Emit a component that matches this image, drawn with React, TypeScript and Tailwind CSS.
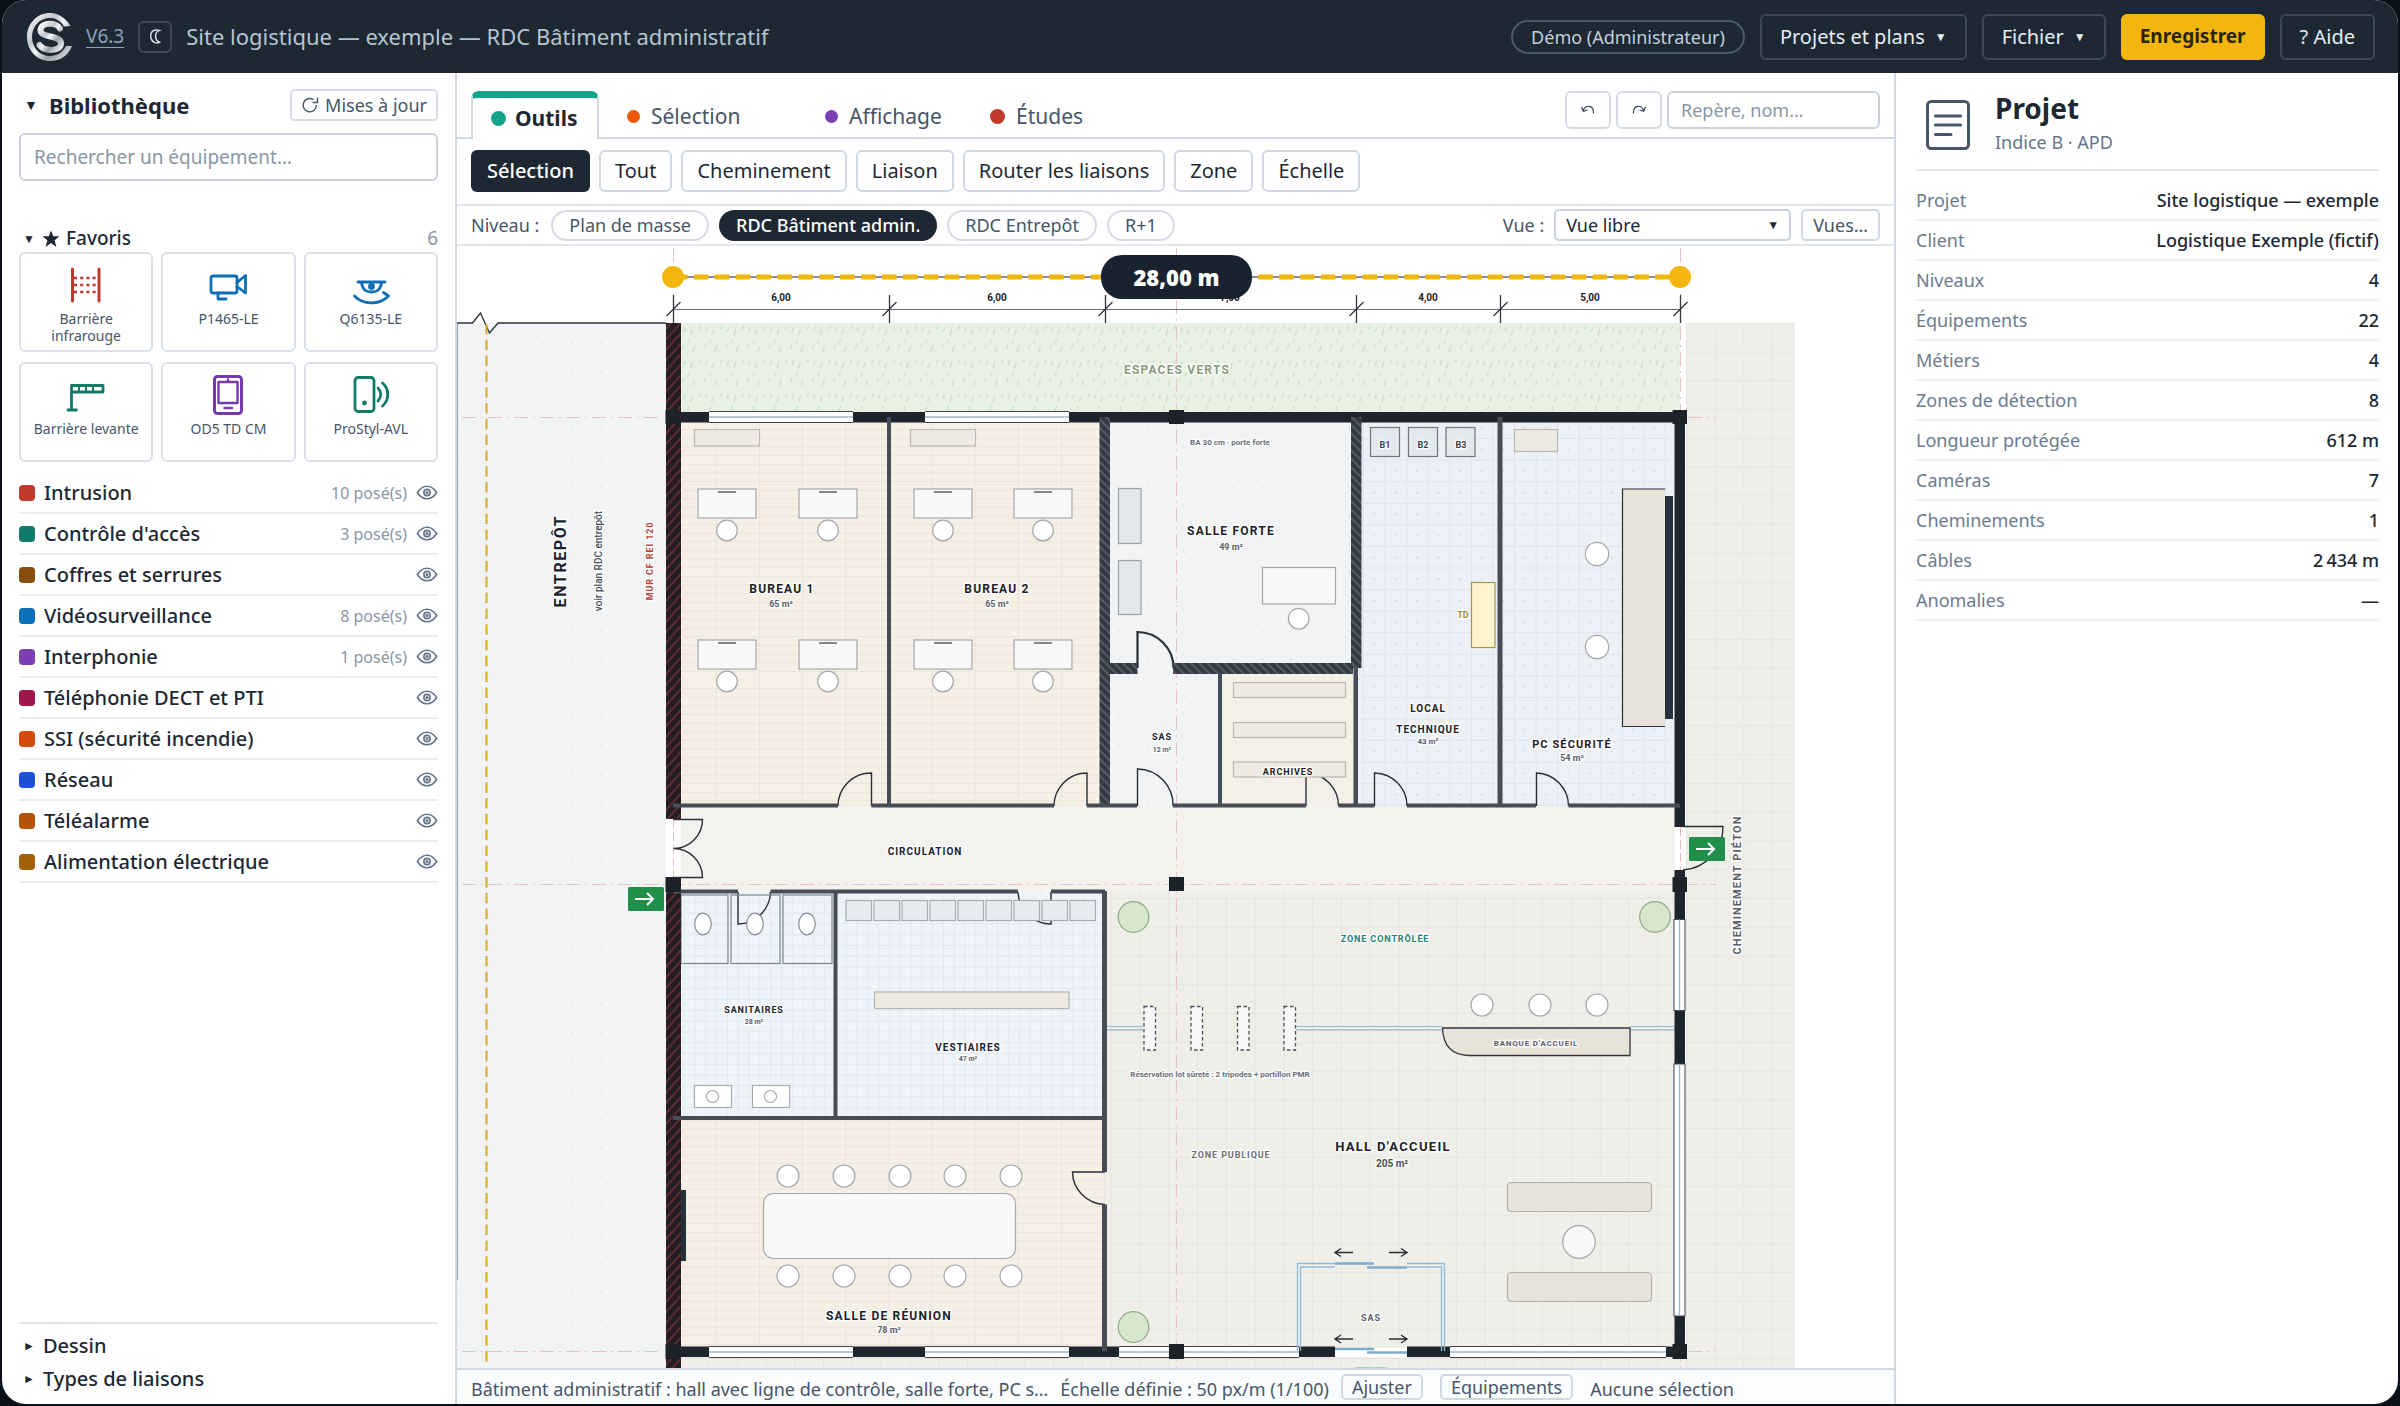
import React from "react";

const ui = "font-['Noto_Sans','Open_Sans',sans-serif]";

/* ---------- icons ---------- */

function Logo() {
  return (
    <svg viewBox="0 0 48 50" className="h-[50px] w-12" aria-hidden="true">
      <defs>
        <linearGradient id="chrome" x1="0" y1="0" x2="1" y2="1">
          <stop offset="0" stopColor="#ffffff" />
          <stop offset="0.35" stopColor="#c3c7cc" />
          <stop offset="0.5" stopColor="#f5f6f7" />
          <stop offset="0.7" stopColor="#9aa0a8" />
          <stop offset="1" stopColor="#f1f3f5" />
        </linearGradient>
      </defs>
      <path
        d="M46.500 14 C 41 5, 34 1, 26 1 C 13 1, 3 11.500, 3 25 C 3 38.500, 13 49, 26 49 C 36 49, 44 44, 48 34 L 42 34 C 38.500 40.500, 33 44, 26 44 C 16 44, 8 36, 8 25 C 8 14, 16 6, 26 6 C 32 6, 37 9, 40 14.500 Z"
        fill="url(#chrome)"
      />
      <path
        d="M36 16.500 C 33.500 10.500, 17 9.500, 16.500 18 C 16 26.500, 37.500 22.500, 37 31.500 C 36.500 40, 20 39.500, 15.500 33"
        fill="none"
        stroke="url(#chrome)"
        strokeWidth="6"
        strokeLinecap="round"
      />
    </svg>
  );
}

function Eye() {
  return (
    <svg viewBox="0 0 24 16" className="h-[15px] w-[22px]" fill="none" stroke="#64748b" strokeWidth="1.800" aria-hidden="true">
      <path d="M1.500 8 C 5 2.500, 9 1.200, 12 1.200 S 19 2.500, 22.500 8 C 19 13.500, 15 14.800, 12 14.800 S 5 13.500, 1.500 8 Z" />
      <circle cx="12" cy="8" r="3.400" />
      <circle cx="12" cy="8" r="0.800" fill="#64748b" />
    </svg>
  );
}

function IconBarrier() {
  return (
    <svg viewBox="0 0 40 40" className="size-10" fill="none" stroke="#c0392b" strokeWidth="3" strokeLinecap="round">
      <path d="M6.500 4 V36 M33 4 V36" />
      <path d="M8 13 H32 M8 20 H32 M8 27 H32" strokeDasharray="3 3.200" strokeLinecap="butt" strokeWidth="2.600" />
    </svg>
  );
}
function IconCamera() {
  return (
    <svg viewBox="0 0 40 40" className="size-10" fill="none" stroke="#0f6fb5" strokeWidth="2.800" strokeLinecap="round" strokeLinejoin="round">
      <rect x="3" y="11" width="26" height="17" rx="2" />
      <path d="M29 17.500 L37.500 10.500 V28 L29 21.500 M10 28 V34 H18" />
    </svg>
  );
}
function IconDome() {
  return (
    <svg viewBox="0 0 40 40" className="size-10" fill="none" stroke="#0f6fb5" strokeWidth="2.800" strokeLinecap="round" strokeLinejoin="round">
      <path d="M7 17 H34 M10.500 17 C 11 24, 15 27, 20.500 27 S 30 24, 30.500 17" />
      <circle cx="20.500" cy="21.500" r="2" fill="#0f6fb5" />
      <path d="M3.500 31 C 12 40, 28 40.500, 37.500 31 L32.500 27.500" />
    </svg>
  );
}
function IconGate() {
  return (
    <svg viewBox="0 0 40 40" className="size-10" fill="none" stroke="#127a68" strokeWidth="2.800" strokeLinecap="round" strokeLinejoin="round">
      <path d="M5.500 35 V10.500 H37 V17 H5.500 M2 35 H10.500" />
      <path d="M13 10.500 V17 M20 10.500 V17 M27 10.500 V17" strokeWidth="2" />
    </svg>
  );
}
function IconPhone() {
  return (
    <svg viewBox="0 0 40 40" className="size-10" fill="none" stroke="#743bb0" strokeWidth="3" strokeLinecap="round" strokeLinejoin="round">
      <rect x="6.500" y="1.500" width="27" height="37" rx="3" />
      <rect x="10.500" y="7" width="19" height="21" strokeWidth="2.400" />
      <path d="M16.500 33 H24 M20 4.500 V5" strokeWidth="2.400" />
    </svg>
  );
}
function IconReader() {
  return (
    <svg viewBox="0 0 40 40" className="size-10" fill="none" stroke="#127a68" strokeWidth="2.800" strokeLinecap="round" strokeLinejoin="round">
      <rect x="4" y="2.500" width="19" height="34" rx="3" />
      <path d="M27 13 C 30.500 17, 30.500 22, 27 26 M31.500 8 C 38.500 14, 38.500 25, 31.500 31" />
      <circle cx="13.500" cy="28" r="1" fill="#127a68" />
    </svg>
  );
}

/* ---------- floor plan ---------- */

type Box = [number, number, number, number];

const DARK = "#20242c";
const WALL = "#474d57";

function Rects({ items, fill, stroke, rx = 0 }: { items: Box[]; fill: string; stroke?: string; rx?: number }) {
  return (
    <>
      {items.map(([x, y, w, h], i) => (
        <rect key={i} x={x} y={y} width={w} height={h} rx={rx} fill={fill} stroke={stroke} />
      ))}
    </>
  );
}

function Label({
  x,
  y,
  size,
  children,
  color = "#1c222b",
  bold = true,
  spread = true,
  vertical = false,
}: {
  x: number;
  y: number;
  size: number;
  children: string;
  color?: string;
  bold?: boolean;
  spread?: boolean;
  vertical?: boolean;
}) {
  return (
    <text
      x={x}
      y={y}
      fontSize={size}
      fontWeight={bold ? 700 : 500}
      fill={color}
      stroke="#ffffff"
      strokeWidth="3"
      strokeOpacity="0.850"
      strokeLinejoin="round"
      paintOrder="stroke"
      textAnchor="middle"
      dominantBaseline="central"
      className={spread ? "tracking-widest" : ""}
      transform={vertical ? `rotate(-90 ${x} ${y})` : undefined}
    >
      {children}
    </text>
  );
}

function WindowH({ x, y, w }: { x: number; y: number; w: number }) {
  return (
    <g>
      <rect x={x} y={y} width={w} height={11} fill="#fff" />
      <path d={`M${x} ${y}H${x + w}M${x} ${y + 11}H${x + w}`} stroke="#3f444b" />
      <path d={`M${x} ${y + 5.5}H${x + w}`} stroke="#9fb4cb" strokeWidth="1.400" />
    </g>
  );
}
function WindowV({ y, h }: { y: number; h: number }) {
  return (
    <g>
      <rect x={1674} y={y} width={11} height={h} fill="#fff" stroke="#3f444b" />
      <path d={`M1679.5 ${y}V${y + h}`} stroke="#9fb4cb" strokeWidth="1.400" />
    </g>
  );
}

function ExitSign({ x, y }: { x: number; y: number }) {
  return (
    <g>
      <rect x={x} y={y} width={36} height={24} rx="1.500" fill="#1f8f4a" />
      <path d={`M${x + 7} ${y + 12}h18M${x + 19} ${y + 6}l6 6l-6 6`} fill="none" stroke="#fff" strokeWidth="2" />
    </g>
  );
}

const desks = [698, 799, 914, 1014].flatMap((x) => [
  [x, 489],
  [x, 640],
]);

const chairs: [number, number, number][] = [
  ...desks.map(([x, y]) => [x + 29, y + 41.5, 10.300] as [number, number, number]),
  [1298.700, 618.700, 10.300],
  [1597, 554, 11.700],
  [1597, 647, 11.700],
  [1482, 1005, 11],
  [1540, 1005, 11],
  [1597, 1005, 11],
  ...[788, 844, 900, 955, 1011].flatMap(
    (x) =>
      [
        [x, 1176, 11],
        [x, 1276, 11],
      ] as [number, number, number][],
  ),
];

function FloorPlan() {
  return (
    <svg
      viewBox="457 246 1438 1122"
      preserveAspectRatio="xMinYMin slice"
      className="block h-full w-full font-['Roboto',sans-serif]"
      role="img"
      aria-label="Plan RDC Bâtiment administratif"
    >
      <defs>
        <pattern id="dots" width="28.760" height="28.760" patternUnits="userSpaceOnUse" x="471" y="323">
          <circle cx="0.800" cy="6" r="0.800" fill="#dadde3" />
          <circle cx="15" cy="20" r="0.800" fill="#dadde3" />
        </pattern>
        <pattern id="grass" width="21.600" height="33.400" patternUnits="userSpaceOnUse" x="681" y="323">
          <path
            d="M3 9l1.500-4.500M9.500 12l2-6M18 7l1.500-3.500M1.500 26l1.500-4.500M12 29l2-6M7 20l1.500-3.500"
            stroke="#c6d6bc"
            fill="none"
          />
        </pattern>
        <pattern id="parquet" width="43.150" height="8.630" patternUnits="userSpaceOnUse" x="672.600" y="412">
          <path d="M0 0.500H43.150M0.500 0V8.630" stroke="#ebe4d9" fill="none" />
        </pattern>
        <pattern id="paving" width="28.760" height="28.760" patternUnits="userSpaceOnUse" x="1139.500" y="898">
          <path d="M0 0.500H28.760M0.500 0V28.760" stroke="#e5e4df" fill="none" />
        </pattern>
        <pattern id="tech" width="21.570" height="21.570" patternUnits="userSpaceOnUse" x="1363" y="416.500">
          <path d="M0 0.500H21.570M0.500 0V21.570" stroke="#dfe3eb" fill="none" />
          <circle cx="11" cy="11.500" r="1" fill="#cdd3df" />
        </pattern>
        <pattern id="tiles" width="10.800" height="10.800" patternUnits="userSpaceOnUse" x="673" y="891">
          <path d="M0 0.500H10.800M0.500 0V10.800" stroke="#e1e9f1" fill="none" />
        </pattern>
        <pattern id="fire" width="7" height="7" patternUnits="userSpaceOnUse" patternTransform="rotate(42)">
          <rect width="7" height="7" fill="#241d22" />
          <path d="M1 0V7" stroke="#7c3438" strokeWidth="1.300" />
        </pattern>
        <pattern id="armored" width="6" height="6" patternUnits="userSpaceOnUse" patternTransform="rotate(-45)">
          <rect width="6" height="6" fill="#343a43" />
          <path d="M1 0V6" stroke="#737b87" />
        </pattern>
      </defs>

      {/* grounds */}
      <rect x="457" y="323" width="209" height="1045" fill="#f1f3f5" />
      <rect x="457" y="323" width="209" height="1045" fill="url(#dots)" />
      <rect x="681" y="323" width="999" height="89" fill="#e8f1e2" />
      <rect x="681" y="323" width="999" height="89" fill="url(#grass)" />
      <rect x="1686" y="323" width="109" height="1045" fill="#efeee9" />
      <rect x="1686" y="323" width="109" height="1045" fill="url(#paving)" />
      <rect x="681" y="1357" width="1010" height="11" fill="#efeee9" />
      <rect x="681" y="1357" width="1010" height="11" fill="url(#paving)" />

      {/* rooms */}
      <rect x="681" y="417" width="421" height="389" fill="#f6efe5" />
      <rect x="681" y="417" width="421" height="389" fill="url(#parquet)" />
      <rect x="1108" y="417" width="248" height="389" fill="#f1f3f5" />
      <rect x="1108" y="417" width="248" height="389" fill="url(#dots)" />
      <rect x="1220" y="674" width="136" height="132" fill="#f3f0ea" />
      <rect x="1356" y="417" width="319" height="389" fill="#edf1f7" />
      <rect x="1356" y="417" width="319" height="389" fill="url(#tech)" />
      <rect x="681" y="806" width="994" height="86" fill="#f3f2ee" />
      <rect x="681" y="892" width="424" height="226" fill="#eef4f9" />
      <rect x="681" y="892" width="424" height="226" fill="url(#tiles)" />
      <rect x="681" y="1118" width="424" height="230" fill="#f6efe5" />
      <rect x="681" y="1118" width="424" height="230" fill="url(#parquet)" />
      <rect x="1105" y="892" width="570" height="456" fill="#efeee9" />
      <rect x="1105" y="892" width="570" height="456" fill="url(#paving)" />

      {/* warehouse edge */}
      <path d="M457.500 323V1280" stroke="#94a3b8" />
      <path d="M457 323H472.500L480.500 313L489.500 333L498 323H666" fill="none" stroke="#2c3138" strokeWidth="1.300" />
      <path d="M486.500 324V1362" stroke="#dba91f" strokeWidth="2" strokeDasharray="10.500 5.300" />

      {/* door swings */}
      <g fill="none" stroke="#2a2e35" strokeWidth="1.400">
        <path d="M871.500 806V773A33 33 0 0 0 838 806" />
        <path d="M1087 806V773A33 33 0 0 0 1054 806" />
        <path d="M1137.500 806V769A36 36 0 0 1 1173 806" />
        <path d="M1306 806V773A33 33 0 0 1 1338.500 806" />
        <path d="M1374.500 806V773A33 33 0 0 1 1407 806" />
        <path d="M1536.500 806V773A33 33 0 0 1 1568.500 806" />
        <path d="M738 892V924A33 33 0 0 0 770.500 892" />
        <path d="M1051 892V924A33 33 0 0 1 1018 892" />
        <path d="M1105 1172H1072.500A33 33 0 0 0 1105 1204.500" />
        <path d="M1137.500 668V632A36 36 0 0 1 1173.500 668" strokeWidth="2.200" />
      </g>

      {/* furniture */}
      <g strokeWidth="1.200">
        <Rects items={[[694.5, 429.5, 65, 16.5], [910.5, 429.5, 65, 16.5]]} fill="#edeae4" stroke="#b9b7b2" />
        <Rects items={[[1514.5, 429.5, 43, 22]]} fill="#edeae4" stroke="#b9b7b2" />
        {desks.map(([x, y], i) => (
          <g key={i}>
            <rect x={x} y={y} width={58} height={29} fill="#f8f8f8" stroke="#a6a8ab" />
            <rect x={x + 20} y={y + 2} width={18} height={2} fill="#83868b" />
          </g>
        ))}
        <Rects items={[[1118.5, 488.5, 22.5, 55], [1118.5, 560.5, 22.5, 54]]} fill="#e4e7ec" stroke="#9da1a8" />
        <Rects items={[[1262.5, 567.5, 73, 36.5]]} fill="#f8f8f8" stroke="#a6a8ab" />
        <Rects items={[[1233.5, 682.5, 112, 15], [1233.5, 722.5, 112, 15], [1233.5, 762, 112, 15]]} fill="#edeae1" stroke="#b9b7b0" />
        <Rects items={[[1370.5, 427.5, 29, 29], [1408.5, 427.5, 29, 29], [1446, 427.5, 29, 29]]} fill="#e4e7eb" stroke="#70757d" />
        <Rects items={[[1471.5, 582.5, 23.5, 65]]} fill="#fff3cc" stroke="#a3945a" />
        <rect x="1622" y="489" width="43" height="237.500" fill="#e7e3d9" />
        <path d="M1665 489H1622.500V726.500H1665" fill="none" stroke="#2c3036" />
        <rect x="1665" y="496" width="8" height="223" fill="#26313d" />
        <Rects items={[[681, 895, 47, 68.5], [731, 895, 49, 68.5], [783, 895, 49, 68.5]]} fill="none" stroke="#7d858f" />
        {[703, 755, 807].map((x) => (
          <ellipse key={x} cx={x} cy={924} rx="8.300" ry="10.800" fill="#fff" stroke="#8d9198" />
        ))}
        {[694.5, 752.5].map((x) => (
          <g key={x}>
            <rect x={x} y={1085.5} width={37} height={22} fill="#fff" stroke="#a9acb0" />
            <circle cx={x + 18} cy={1096.5} r={6} fill="none" stroke="#a9acb0" />
          </g>
        ))}
        {[0, 1, 2, 3, 4, 5, 6, 7, 8].map((i) => (
          <rect key={i} x={846 + i * 28} y={900.5} width={25.5} height={20} fill="#e7ebf0" stroke="#a9acb2" />
        ))}
        <Rects items={[[874.5, 992, 194.5, 16.5]]} fill="#edeae1" stroke="#b4b2ad" />
        <rect x="681" y="1190" width="5" height="71" fill="#26313d" />
        <rect x="763.500" y="1193.500" width="252" height="65" rx="10" fill="#f8f8f8" stroke="#a6a8ab" />
        <Rects items={[[1507.5, 1182.5, 144, 29], [1507.5, 1272.5, 144, 29]]} fill="#e7e4d9" stroke="#b0afaa" rx={4} />
        <circle cx="1579" cy="1242" r="16.300" fill="#f8f8f8" stroke="#a6a8ab" />
        {chairs.map(([x, y, r], i) => (
          <circle key={i} cx={x} cy={y} r={r} fill="#fff" stroke="#a6a8ab" />
        ))}
        {[[1133.5, 917], [1655, 917], [1133.5, 1327]].map(([x, y], i) => (
          <circle key={i} cx={x} cy={y} r={15.300} fill="#d6e7cb" stroke="#8fab82" />
        ))}
      </g>

      {/* glazing */}
      <g stroke="#93bcd6" strokeWidth="1.200" fill="none">
        <path d="M1107 1026.500H1143M1107 1029.800H1143M1296 1026.500H1442M1296 1029.800H1442M1630 1026.500H1676M1630 1029.800H1676" />
      </g>
      <path d="M1442.500 1028H1630V1055.500H1469C1452 1055 1443 1046 1442.500 1028Z" fill="#e7e3d9" stroke="#33373d" strokeWidth="1.300" />
      {[1144, 1191, 1237.5, 1284].map((x) => (
        <rect key={x} x={x} y={1006.5} width={11.5} height={43.5} fill="#f8f8f8" stroke="#4c5057" strokeDasharray="3.500 2.500" strokeWidth="1.300" />
      ))}

      {/* structural axes */}
      <g stroke="#e6c4c1" strokeDasharray="14 5 2 5" fill="none">
        <path d="M462 417.500H660M1688 417.500H1716M462 884.500H1716M462 1351.500H660M1688 1351.500H1716" />
        <path d="M673.500 248V1368M1176.500 248V1368M1680.500 248V1368" />
      </g>

      {/* outer walls */}
      <Rects
        items={[
          [666, 412, 1008, 10.5],
          [1674.5, 412, 10.5, 415],
          [1674.5, 870, 10.5, 488],
          [666, 1346.5, 669, 10.5],
          [1407, 1346.5, 278, 10.5],
        ]}
        fill={DARK}
      />
      <rect x="666" y="323" width="15" height="496" fill="url(#fire)" />
      <rect x="666" y="877" width="15" height="491" fill="url(#fire)" />
      <rect x="666" y="819" width="8" height="58" fill="#fff" />
      <rect x="1675" y="827" width="10" height="43" fill="#fff" />
      <path d="M673.500 819V877M1680.500 827V870" stroke="#e9bdbb" strokeDasharray="9 4" />
      <WindowH x={709} y={411.5} w={144} />
      <WindowH x={925} y={411.5} w={144} />
      <WindowH x={709} y={1346.5} w={144} />
      <WindowH x={925} y={1346.5} w={144} />
      <WindowH x={1119} y={1346.5} w={180} />
      <WindowH x={1450} y={1346.5} w={216} />
      <WindowV y={919.5} h={91} />
      <WindowV y={1064} h={252} />

      {/* partitions */}
      <Rects
        items={[
          [673, 803.5, 165, 4],
          [871.5, 803.5, 182.5, 4],
          [1087, 803.5, 50, 4],
          [1173, 803.5, 133, 4],
          [1338.5, 803.5, 36, 4],
          [1407, 803.5, 129, 4],
          [1568.5, 803.5, 111.5, 4],
          [887, 417, 4, 388],
          [1218, 674, 4, 131],
          [1353.5, 668, 4.5, 138],
          [1497.5, 417, 5, 388],
          [673, 889.5, 65, 4],
          [770.5, 889.5, 247.5, 4],
          [1051, 889.5, 54, 4],
          [833.5, 891, 4, 227],
          [673, 1116, 430, 4],
          [1102, 891, 5, 281],
          [1102, 1204.5, 5, 147],
        ]}
        fill={WALL}
      />
      <Rects
        items={[
          [1099.5, 417, 10.5, 387],
          [1351, 417, 10.5, 251],
          [1110, 663, 27.5, 11],
          [1173, 663, 180, 11],
        ]}
        fill="url(#armored)"
      />

      {/* columns */}
      <Rects
        items={[
          [665.5, 410, 15, 14],
          [1169, 410, 15, 14],
          [1672.5, 410, 14.5, 14],
          [665.5, 877, 15, 15],
          [1169, 877, 15, 14],
          [1672.5, 877, 14.5, 15],
          [665.5, 1344, 15, 15],
          [1169, 1344, 15, 15],
          [1672.5, 1344, 14.5, 15],
        ]}
        fill="#1d2229"
      />

      {/* entrance lobby */}
      <g stroke="#93bcd6" strokeWidth="1.300" fill="none">
        <path d="M1335 1263.500H1297.500V1351M1335 1267H1300.500V1351M1407 1263.500H1444.500V1351M1407 1267H1441.500V1351" />
        <path d="M1335 1263.500H1374M1367 1267.500H1407M1335 1349H1374M1367 1352.500H1407" stroke="#7fabcd" strokeWidth="2.400" />
      </g>
      <path d="M1355 1367.500H1387" stroke="#a9d8bf" />
      <g stroke="#2a2e35" strokeWidth="1.400" fill="none">
        {[1252.5, 1339].map((y) => (
          <path
            key={y}
            d={`M1353 ${y}H1335M1341 ${y - 4}L1335 ${y}L1341 ${y + 4}M1389 ${y}H1407M1401 ${y - 4}L1407 ${y}L1401 ${y + 4}`}
          />
        ))}
        <path d="M673.500 819.500H702.500A29 29 0 0 1 673.500 848.500A29 29 0 0 1 702.500 877.500H673.500" />
        <path d="M1683 826.500H1723A43 43 0 0 1 1683 870" />
      </g>
      <ExitSign x={628} y={887} />
      <ExitSign x={1689} y={837} />

      {/* dimensions */}
      <path d="M673 309.500H1680" stroke="#6b6f75" />
      {[673.5, 889.5, 1105.5, 1356.5, 1500.5, 1680.5].map((x) => (
        <path key={x} d={`M${x} 295V323M${x - 7} 316L${x + 7} 302`} stroke="#33373d" strokeWidth="1.300" />
      ))}
      <Label x={781} y={297} size={10} spread={false}>6,00</Label>
      <Label x={997} y={297} size={10} spread={false}>6,00</Label>
      <Label x={1230} y={297} size={10} spread={false}>7,00</Label>
      <Label x={1428} y={297} size={10} spread={false}>4,00</Label>
      <Label x={1590} y={297} size={10} spread={false}>5,00</Label>
      <path d="M673 277H1680" stroke="#8b8f95" strokeWidth="2" />
      <path d="M673 277H1680" stroke="#f2b60c" strokeWidth="5" strokeDasharray="14.500 6.400" />
      <circle cx="673" cy="277" r="11" fill="#f2b60c" />
      <circle cx="1680" cy="277" r="11" fill="#f2b60c" />
      <rect x="1101" y="255" width="151" height="44" rx="21" fill="#19232f" />
      <text x="1176.500" y="277" fontSize="22" fontWeight="900" fill="#fff" textAnchor="middle" dominantBaseline="central" className="font-['Noto_Sans',sans-serif]">
        28,00 m
      </text>

      {/* room labels */}
      <Label x={1177} y={370} size={12} color="#8b9b80">ESPACES VERTS</Label>
      <Label x={782} y={589} size={12}>BUREAU 1</Label>
      <Label x={781} y={604} size={9} spread={false} color="#5a6069">65 m²</Label>
      <Label x={997} y={589} size={12}>BUREAU 2</Label>
      <Label x={997} y={604} size={9} spread={false} color="#5a6069">65 m²</Label>
      <Label x={1231} y={531} size={12}>SALLE FORTE</Label>
      <Label x={1231} y={547} size={9} spread={false} color="#5a6069">49 m²</Label>
      <Label x={1230} y={442} size={8} spread={false} color="#6a7078">BA 30 cm · porte forte</Label>
      <Label x={1162} y={737} size={9}>SAS</Label>
      <Label x={1162} y={750} size={7} spread={false} color="#5a6069">12 m²</Label>
      <Label x={1288} y={772} size={9}>ARCHIVES</Label>
      <Label x={1385} y={445} size={9} spread={false} color="#3b4149">B1</Label>
      <Label x={1423} y={445} size={9} spread={false} color="#3b4149">B2</Label>
      <Label x={1461} y={445} size={9} spread={false} color="#3b4149">B3</Label>
      <Label x={1463} y={615} size={9} spread={false} color="#a08c2c">TD</Label>
      <Label x={1428} y={708} size={10}>LOCAL</Label>
      <Label x={1428} y={729} size={10}>TECHNIQUE</Label>
      <Label x={1428} y={741} size={8} spread={false} color="#5a6069">43 m²</Label>
      <Label x={1572} y={744} size={11}>PC SÉCURITÉ</Label>
      <Label x={1572} y={758} size={9} spread={false} color="#5a6069">54 m²</Label>
      <Label x={925} y={851} size={10}>CIRCULATION</Label>
      <Label x={754} y={1010} size={9}>SANITAIRES</Label>
      <Label x={754} y={1022} size={7} spread={false} color="#5a6069">28 m²</Label>
      <Label x={968} y={1047} size={10}>VESTIAIRES</Label>
      <Label x={968} y={1059} size={7} spread={false} color="#5a6069">47 m²</Label>
      <Label x={889} y={1316} size={12}>SALLE DE RÉUNION</Label>
      <Label x={889} y={1330} size={9} spread={false} color="#5a6069">78 m²</Label>
      <Label x={1385} y={939} size={9} color="#1f7f7a">ZONE CONTRÔLÉE</Label>
      <Label x={1231} y={1155} size={9} color="#6a7078">ZONE PUBLIQUE</Label>
      <Label x={1393} y={1146} size={13}>HALL D'ACCUEIL</Label>
      <Label x={1392} y={1163} size={10} spread={false} color="#4a5059">205 m²</Label>
      <Label x={1220} y={1074} size={8} spread={false} color="#6a7078">Réservation lot sûreté : 2 tripodes + portillon PMR</Label>
      <Label x={1536} y={1043} size={8} color="#5a6069">BANQUE D'ACCUEIL</Label>
      <Label x={1371} y={1318} size={9} color="#5a6069">SAS</Label>
      <Label x={560} y={561} size={16} vertical>ENTREPÔT</Label>
      <Label x={598} y={561} size={10} spread={false} bold={false} color="#4a5059" vertical>voir plan RDC entrepôt</Label>
      <Label x={650} y={561} size={9} color="#b8433a" vertical>MUR CF REI 120</Label>
      <Label x={1737} y={885} size={11} color="#5a6069" vertical>CHEMINEMENT PIÉTON</Label>
    </svg>
  );
}

/* ---------- data ---------- */

const favorites = [
  { name: "Barrière infrarouge", icon: <IconBarrier /> },
  { name: "P1465-LE", icon: <IconCamera /> },
  { name: "Q6135-LE", icon: <IconDome /> },
  { name: "Barrière levante", icon: <IconGate /> },
  { name: "OD5 TD CM", icon: <IconPhone /> },
  { name: "ProStyl-AVL", icon: <IconReader /> },
];

const trades = [
  { name: "Intrusion", color: "bg-[#c0392b]", count: "10 posé(s)" },
  { name: "Contrôle d'accès", color: "bg-[#117a6b]", count: "3 posé(s)" },
  { name: "Coffres et serrures", color: "bg-[#854d0e]", count: "" },
  { name: "Vidéosurveillance", color: "bg-[#0f70b7]", count: "8 posé(s)" },
  { name: "Interphonie", color: "bg-[#7b3fb5]", count: "1 posé(s)" },
  { name: "Téléphonie DECT et PTI", color: "bg-[#9d174d]", count: "" },
  { name: "SSI (sécurité incendie)", color: "bg-[#d9480f]", count: "" },
  { name: "Réseau", color: "bg-[#1d4ed8]", count: "" },
  { name: "Téléalarme", color: "bg-[#b45309]", count: "" },
  { name: "Alimentation électrique", color: "bg-[#a16207]", count: "" },
];

const tools = ["Tout", "Cheminement", "Liaison", "Router les liaisons", "Zone", "Échelle"];

const facts = [
  ["Projet", "Site logistique — exemple"],
  ["Client", "Logistique Exemple (fictif)"],
  ["Niveaux", "4"],
  ["Équipements", "22"],
  ["Métiers", "4"],
  ["Zones de détection", "8"],
  ["Longueur protégée", "612 m"],
  ["Caméras", "7"],
  ["Cheminements", "1"],
  ["Câbles", "2\u202f434 m"],
  ["Anomalies", "—"],
];

/* ---------- page ---------- */

function Header() {
  const btn = "flex h-[46px] items-center gap-[10px] rounded-md border-2 border-[#3b4957] px-[18px] text-xl text-[#e6ecf2]";
  return (
    <header className="flex h-[73px] shrink-0 items-center bg-[#1d2833] pr-[23px] pl-[22px]">
      <Logo />
      <a href="#version" className="ml-[14px] text-[19px] text-[#8fa3b8] underline underline-offset-4">V6.3</a>
      <button aria-label="Thème sombre" className="ml-[14px] flex h-8 w-[34px] items-center justify-center rounded-md border-2 border-[#3b4957]">
        <svg viewBox="0 0 16 20" className="h-[17px] w-[13px]" fill="none" stroke="#dbe3ea" strokeWidth="1.800" aria-hidden="true">
          <path d="M13 2.500C3 0 1 7 2.500 12C4 18 10 19 13 17C7 15 6 5 13 2.500Z" />
        </svg>
      </button>
      <h1 className="ml-[14px] flex-1 text-[22px] text-[#b6c4d2]">Site logistique — exemple — RDC Bâtiment administratif</h1>
      <div className="flex items-center gap-[15px]">
        <span className="flex h-[34px] items-center rounded-full border-2 border-[#4a5967] px-[18px] text-lg text-[#c3d0dc]">Démo (Administrateur)</span>
        <button className={btn}>Projets et plans <span className="text-xs">▼</span></button>
        <button className={btn}>Fichier <span className="text-xs">▼</span></button>
        <button className="h-[46px] rounded-md bg-[#f2b60c] px-[19px] text-[19px] font-bold text-[#2a2408]">Enregistrer</button>
        <button className={btn}>? Aide</button>
      </div>
    </header>
  );
}

function Library() {
  return (
    <aside className="flex w-[455px] shrink-0 flex-col border-r-2 border-[#d0d8e2] px-[17px] pb-[9px]">
      <div className="flex h-[60px] items-center pt-1">
        <span className="w-[30px] pl-[5px] text-sm text-[#1d2833]">▼</span>
        <h2 className="flex-1 text-[22px] font-bold text-[#1d2833]">Bibliothèque</h2>
        <button className="flex h-8 items-center gap-[6px] rounded-[5px] border-2 border-[#d5dce5] px-[9px] text-lg leading-6 text-[#475569]">
          <svg viewBox="0 0 18 18" className="size-[18px]" fill="none" stroke="#475569" strokeWidth="1.400" aria-hidden="true">
            <path d="M15.500 9A6.700 6.700 0 1 1 12.500 3.600M16.500 1.500V6.500H11.500" />
          </svg>
          Mises à jour
        </button>
      </div>
      <input
        aria-label="Rechercher un équipement"
        placeholder="Rechercher un équipement…"
        className="h-12 rounded-md border-2 border-[#c9d2dc] px-[13px] text-[19px] placeholder:text-[#8a96a5]"
      />
      <div className="mt-11 flex h-[27px] items-center text-[19px] font-medium text-[#1d2833]">
        <span className="w-[23px] pl-1 text-xs">▼</span>
        <h3 className="flex flex-1 items-center gap-[6px]">
          <svg viewBox="0 0 20 20" className="size-[18px]" fill="#1d2833" aria-hidden="true">
            <path d="M10 0.500L12.500 7H19.500L14 11.500L16 19L10 14.500L4 19L6 11.500L0.500 7H7.500Z" />
          </svg>
          Favoris
        </h3>
        <span className="font-normal text-[#8a96a5]">6</span>
      </div>
      <ul className="grid grid-cols-3 gap-x-2 gap-y-[10px]">
        {favorites.map((f) => (
          <li key={f.name}>
            <button className="flex h-[100px] w-full flex-col items-center rounded-md border-2 border-[#d9e0e7] pt-[11px] text-sm leading-[17px] text-[#475569]">
              {f.icon}
              <span className={f.name === "Barrière infrarouge" ? "mt-[5px] w-24" : "mt-[5px] whitespace-nowrap"}>{f.name}</span>
            </button>
          </li>
        ))}
      </ul>
      <ul className="mt-[11px]">
        {trades.map((t) => (
          <li key={t.name} className="flex h-[41px] items-center border-b-2 border-[#e9edf2]">
            <span className={"mr-[9px] size-4 rounded-[4px] " + t.color} />
            <span className="flex-1 text-xl font-medium text-[#1d2833]">{t.name}</span>
            <span className="mr-[9px] text-base text-[#8a96a5]">{t.count}</span>
            <button aria-label={"Afficher " + t.name}><Eye /></button>
          </li>
        ))}
      </ul>
      <div className="mt-auto border-t-2 border-[#e2e7ec] pt-[5px] text-xl font-medium text-[#1d2833]">
        <button className="flex h-[33px] items-center"><span className="w-6 pl-1 text-left text-xs">►</span>Dessin</button>
        <button className="flex h-[33px] items-center"><span className="w-6 pl-1 text-left text-xs">►</span>Types de liaisons</button>
      </div>
    </aside>
  );
}

function Workspace() {
  const tab = "flex h-[46px] items-center gap-[11px] pt-[5px] text-[21px] text-[#475569]";
  const pill = "h-[31px] rounded-full border-2 border-[#d5dce5] px-4 text-lg leading-[25px] text-[#475569]";
  const square = "flex h-[38px] w-[46px] items-center justify-center rounded-md border-2 border-[#d5dce5]";
  const small = "h-[26px] rounded-[5px] border-2 border-[#d0d8e2] px-[9px] leading-[20px]";
  return (
    <main className="flex min-w-0 flex-1 flex-col">
      <div className="flex h-[66px] shrink-0 items-end border-b-2 border-[#d0d8e2] pr-[14px] pl-[14px]">
        <nav className="flex flex-1 items-end">
          <button className="-mb-[2px] flex h-12 w-[128px] items-center gap-[9px] rounded-t-lg border-x-2 border-t-[7px] border-x-[#d0d8e2] border-t-[#14a38b] bg-white pl-[18px] text-[21px] font-bold text-[#1d2833]">
            <span className="size-[15px] rounded-full bg-[#14a38b]" />Outils
          </button>
          <button className={tab + " ml-7 w-[198px]"}><span className="size-[13px] rounded-full bg-[#e8590c]" />Sélection</button>
          <button className={tab + " w-[165px]"}><span className="size-[13px] rounded-full bg-[#7b3fb5]" />Affichage</button>
          <button className={tab}><span className="size-[15px] rounded-full bg-[#c0392b]" />Études</button>
        </nav>
        <div className="mb-2 flex items-center gap-[5px]">
          <button aria-label="Annuler" className={square}>
            <svg viewBox="0 0 18 14" className="h-3 w-4" fill="none" stroke="#334155" strokeWidth="1.400"><path d="M1.500 3.500L3.500 8.500L8.500 7M3.500 8C6 0 16 1 15.500 11" /></svg>
          </button>
          <button aria-label="Rétablir" className={square}>
            <svg viewBox="0 0 18 14" className="h-3 w-4" fill="none" stroke="#334155" strokeWidth="1.400"><path d="M16.500 3.500L14.500 8.500L9.500 7M14.500 8C12 0 2 1 2.500 11" /></svg>
          </button>
          <input aria-label="Repère, nom" placeholder="Repère, nom…" className="h-[38px] w-[213px] rounded-md border-2 border-[#c9d2dc] px-3 text-lg placeholder:text-[#8a96a5]" />
        </div>
      </div>

      <div className="flex h-[67px] shrink-0 items-center gap-[9px] border-b-2 border-[#e2e7ec] pr-4 pb-[2px] pl-[14px] text-xl text-[#1d2833]">
        <button className="h-[42px] rounded-md bg-[#1d2833] px-4 font-medium text-white">Sélection</button>
        {tools.map((t) => (
          <button key={t} className="h-[42px] rounded-md border-2 border-[#d0d8e2] px-[14px]">{t}</button>
        ))}
      </div>

      <div className="flex h-10 shrink-0 items-center gap-[10px] border-b-2 border-[#e2e7ec] px-[14px] text-lg text-[#475569]">
        <span className="mr-[2px]">Niveau :</span>
        <button className={pill}>Plan de masse</button>
        <button className="h-[31px] rounded-full bg-[#1d2833] px-[17px] font-medium text-white">RDC Bâtiment admin.</button>
        <button className={pill}>RDC Entrepôt</button>
        <button className={pill}>R+1</button>
        <label htmlFor="vue" className="ml-auto">Vue :</label>
        <span className="relative">
          <select id="vue" className="h-8 w-[237px] appearance-none rounded-[5px] border-2 border-[#c9d2dc] bg-white px-[10px] text-lg leading-6 text-[#1d2833]">
            <option>Vue libre</option>
          </select>
          <span className="pointer-events-none absolute top-2 right-3 text-xs text-[#1d2833]">▼</span>
        </span>
        <button className="h-8 rounded-[5px] border-2 border-[#d0d8e2] px-[10px] leading-6">Vues…</button>
      </div>

      <div className="min-h-0 flex-1">
        <FloorPlan />
      </div>

      <footer className="flex h-9 shrink-0 items-center border-t-2 border-[#d0d8e2] bg-[#fbfcfe] px-[14px] text-lg whitespace-nowrap text-[#475569]">
        <p className="pt-1">Bâtiment administratif : hall avec ligne de contrôle, salle forte, PC s…</p>
        <p className="ml-3 pt-1">Échelle définie : 50 px/m (1/100)</p>
        <div className="ml-3 flex items-center gap-[17px]">
          <button className={small}>Ajuster</button>
          <button className={small}>Équipements</button>
          <p className="pt-1">Aucune sélection</p>
        </div>
      </footer>
    </main>
  );
}

function ProjectPanel() {
  return (
    <aside className="w-[504px] shrink-0 border-l-2 border-[#d0d8e2] pr-[19px] pl-5">
      <div className="flex h-[98px] items-center gap-[25px] border-b-2 border-[#e2e7ec] pt-2 pl-[10px]">
        <svg viewBox="0 0 44 50" className="h-[50px] w-11" fill="none" stroke="#475569" strokeWidth="3" strokeLinecap="round" aria-hidden="true">
          <rect x="1.500" y="1.500" width="41" height="47" rx="4" />
          <path d="M9.500 16H34.500M9.500 25H34.500M9.500 34.500H25" />
        </svg>
        <div className="pb-[2px]">
          <h2 className="text-[28px] leading-[36px] font-bold text-[#1d2833]">Projet</h2>
          <p className="text-lg leading-[32px] text-[#64748b]">Indice B · APD</p>
        </div>
      </div>
      <dl className="pt-[10px] text-lg">
        {facts.map(([k, v]) => (
          <div key={k} className="flex h-10 items-center justify-between border-b-2 border-[#edf0f4]">
            <dt className="text-[#6b7b8f]">{k}</dt>
            <dd className="font-medium text-[#1d2833]">{v}</dd>
          </div>
        ))}
      </dl>
    </aside>
  );
}

export default function App() {
  return (
    <div className={"h-screen bg-[#0b1118] px-[2px] pb-[2px] " + ui}>
      <div className="flex h-full flex-col overflow-hidden rounded-[24px] bg-white">
        <Header />
        <div className="flex min-h-0 flex-1">
          <Library />
          <Workspace />
          <ProjectPanel />
        </div>
      </div>
    </div>
  );
}
